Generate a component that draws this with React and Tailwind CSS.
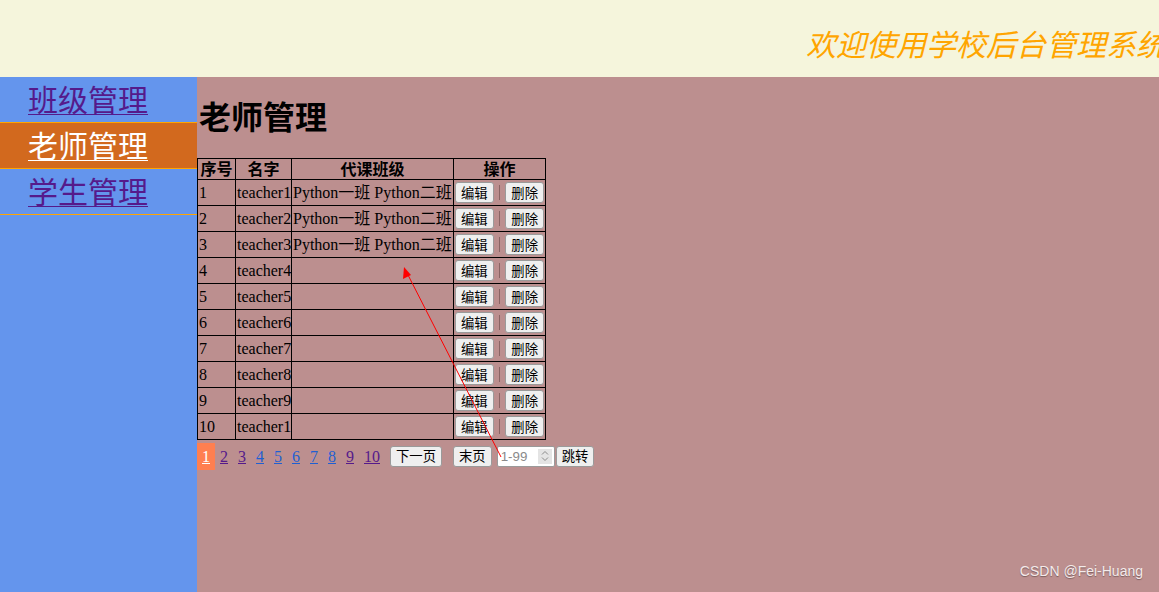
import React from 'react';

const serif = { fontFamily: '"Liberation Serif", "Noto Sans CJK SC", serif' };

const navItems = [
    { label: '班级管理', active: false },
    { label: '老师管理', active: true },
    { label: '学生管理', active: false },
];

const teachers = [
    { id: 1, name: 'teacher1', classes: 'Python一班 Python二班' },
    { id: 2, name: 'teacher2', classes: 'Python一班 Python二班' },
    { id: 3, name: 'teacher3', classes: 'Python一班 Python二班' },
    { id: 4, name: 'teacher4', classes: '' },
    { id: 5, name: 'teacher5', classes: '' },
    { id: 6, name: 'teacher6', classes: '' },
    { id: 7, name: 'teacher7', classes: '' },
    { id: 8, name: 'teacher8', classes: '' },
    { id: 9, name: 'teacher9', classes: '' },
    { id: 10, name: 'teacher1', classes: '' },
];

// visited pages show purple, the rest blue
const pages = [
    { n: 1, visited: false },
    { n: 2, visited: true },
    { n: 3, visited: true },
    { n: 4, visited: false },
    { n: 5, visited: false },
    { n: 6, visited: false },
    { n: 7, visited: false },
    { n: 8, visited: false },
    { n: 9, visited: true },
    { n: 10, visited: true },
];

const btn =
    'shrink-0 whitespace-nowrap h-[21px] px-[5px] bg-[#efefef] border border-[#9a9a9a] rounded-[3px] text-[13.33px] leading-none text-black font-["Noto_Sans_CJK_SC",sans-serif]';

const App = () => {
    return (
        <div className="relative w-[1159px] h-[592px] overflow-hidden flex flex-col" style={serif}>
            {/* header */}
            <div className="h-[77px] shrink-0 bg-[#f5f5dc] flex items-center justify-end overflow-hidden">
                <span className="-mr-[7px] pt-[10px] whitespace-nowrap italic text-[30px] text-[#ffa500] font-['Noto_Sans_CJK_SC',sans-serif]">
                    欢迎使用学校后台管理系统
                </span>
            </div>

            <div className="flex flex-1">
                {/* sidebar */}
                <div className="w-[197px] shrink-0 bg-[#6495ed]">
                    {navItems.map((item) => (
                        <div
                            key={item.label}
                            className={
                                'h-[46px] border-b border-[#ffa500] pl-[28px] pt-[2px] flex items-start ' +
                                (item.active ? 'bg-[#d2691e]' : '')
                            }
                        >
                            <a
                                href="#"
                                className={
                                    'text-[30px] leading-[38px] underline underline-offset-[3px] decoration-1 font-["Noto_Sans_CJK_SC",sans-serif] ' +
                                    (item.active ? 'text-white' : 'text-[#551a8b]')
                                }
                            >
                                {item.label}
                            </a>
                        </div>
                    ))}
                </div>

                {/* main */}
                <div className="flex-1 bg-[#bc8f8f]">
                    <h2 className="mt-[18px] mb-[23px] pl-[2px] text-[32px] leading-[40px] font-bold text-black font-['Noto_Sans_CJK_SC',sans-serif]">
                        老师管理
                    </h2>

                    <table className="table-fixed w-[348px] border-collapse border border-black text-[16px] text-black">
                        <colgroup>
                            <col className="w-[38px]" />
                            <col className="w-[56px]" />
                            <col className="w-[162px]" />
                            <col className="w-[92px]" />
                        </colgroup>
                        <thead>
                            <tr className="h-[21px]">
                                {['序号', '名字', '代课班级', '操作'].map((h) => (
                                    <th key={h} className="border border-black p-0 font-bold text-center leading-[19px] whitespace-nowrap">
                                        {h}
                                    </th>
                                ))}
                            </tr>
                        </thead>
                        <tbody>
                            {teachers.map((t) => (
                                <tr key={t.id} className="h-[26px]">
                                    <td className="border border-black px-[1px] py-0 whitespace-nowrap overflow-hidden">{t.id}</td>
                                    <td className="border border-black px-[1px] py-0 whitespace-nowrap overflow-hidden">{t.name}</td>
                                    <td className="border border-black px-[1px] py-0 whitespace-nowrap overflow-hidden">{t.classes}</td>
                                    <td className="border border-black px-[1px] py-0 whitespace-nowrap">
                                        <div className="flex items-center gap-[5px]">
                                            <button className={btn}>编辑</button>
                                            <span className="w-[2px] h-[15px] bg-[#8a6464]" />
                                            <button className={btn}>删除</button>
                                        </div>
                                    </td>
                                </tr>
                            ))}
                        </tbody>
                    </table>

                    {/* pagination */}
                    <div className="mt-[2px] flex items-center h-[28px]">
                        {pages.map((p) =>
                            p.n === 1 ? (
                                <span key={p.n} className="h-[27px] px-[5px] bg-[#ff7f50] text-white underline leading-[27px]">
                                    1
                                </span>
                            ) : (
                                <a
                                    key={p.n}
                                    href="#"
                                    className={'px-[5px] underline leading-[27px] ' + (p.visited ? 'text-[#551a8b]' : 'text-[#1f5fd2]')}
                                >
                                    {p.n}
                                </a>
                            )
                        )}
                        <button className={btn + ' ml-[5px]'}>下一页</button>
                        <button className={btn + ' ml-[11px]'}>末页</button>
                        <div className="ml-[5px] w-[58px] h-[21px] bg-white border border-[#9a9a9a] rounded-[2px] flex items-center">
                            <input
                                type="text"
                                placeholder="1-99"
                                className="w-[36px] h-full bg-transparent pl-[3px] text-[13.33px] text-black outline-none placeholder:text-[#8a8a8a] font-['Liberation_Sans',sans-serif]"
                            />
                            <div className="ml-auto mr-[2px] w-[14px] h-[15px] bg-[#e4e4e4] flex flex-col items-center justify-center gap-[2px]">
                                <svg width="8" height="5" viewBox="0 0 8 5">
                                    <path d="M1 4.5 L4 1.5 L7 4.5" fill="none" stroke="#8a8a8a" strokeWidth="1" />
                                </svg>
                                <svg width="8" height="5" viewBox="0 0 8 5">
                                    <path d="M1 0.5 L4 3.5 L7 0.5" fill="none" stroke="#8a8a8a" strokeWidth="1" />
                                </svg>
                            </div>
                        </div>
                        <button className={btn + ' ml-[1px] px-[4px]'}>跳转</button>
                    </div>
                </div>
            </div>

            {/* screenshot annotation arrow */}
            <svg className="absolute left-0 top-0 pointer-events-none" width="1159" height="592">
                <line x1="501" y1="457" x2="407" y2="273" stroke="#ff0000" strokeWidth="1" />
                <polygon points="404,267 403,279 411,275" fill="#ff0000" />
            </svg>

            <span className="absolute right-[16px] bottom-[10px] text-[14px] text-[#f4eaea] font-['Liberation_Sans',sans-serif] [text-shadow:0_1px_1px_rgba(0,0,0,0.35)]">
                CSDN @Fei-Huang
            </span>
        </div>
    );
};

export default App;
